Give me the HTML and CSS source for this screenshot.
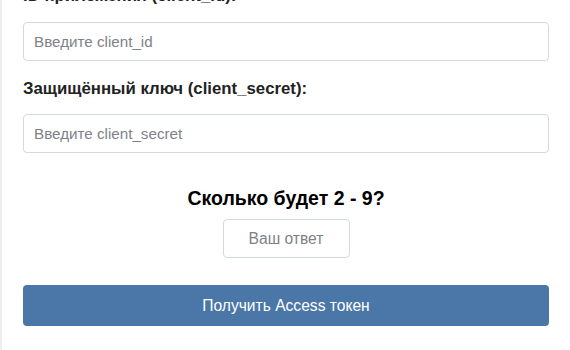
FILE: index.html
```html
<!DOCTYPE html>
<html lang="ru">
<head>
<meta charset="utf-8">
<title>Access token</title>
<link rel="stylesheet" href="styles.css">
</head>
<body>
<div class="page">
  <form class="card">
    <label class="label" for="cid">ID приложения (client_id):</label>
    <input class="field" id="cid" type="text" placeholder="Введите client_id">
    <label class="label" for="csec">Защищённый ключ (client_secret):</label>
    <input class="field" id="csec" type="text" placeholder="Введите client_secret">
    <div class="captcha">
      <div class="question">Сколько будет 2 - 9?</div>
      <input class="answer" type="text" placeholder="Ваш ответ">
    </div>
    <button class="submit" type="button">Получить Access токен</button>
  </form>
</div>
</body>
</html>
```
FILE: styles.css
```css
html, body {
  margin: 0;
  padding: 0;
  background: #ffffff;
  font-family: "Liberation Sans", Arial, sans-serif;
}
.page {
  border-left: 2px solid #edeef0;
  min-height: 350px;
  box-sizing: border-box;
  overflow: hidden;
}
.card {
  display: flex;
  flex-direction: column;
  padding: 0 21px 0 21px;
  margin-top: -14px;
}
.label {
  font-size: 16.8px;
  font-weight: bold;
  line-height: 20px;
  color: #222;
  margin: 0 0 16px 0;
}
.card .field + .label {
  margin-top: 18px;
  margin-bottom: 15px;
}
.field {
  box-sizing: border-box;
  height: 39px;
  width: 100%;
  border: 1px solid #d3d9de;
  border-radius: 4px;
  padding: 0 10px;
  font-family: "Liberation Sans", Arial, sans-serif;
  font-size: 15.2px;
  color: #222;
  outline: none;
}
.field::placeholder, .answer::placeholder {
  color: #7d8287;
  font-family: "Liberation Sans", Arial, sans-serif;
}
.captcha {
  display: flex;
  flex-direction: column;
  align-items: center;
  margin-top: 34px;
}
.question {
  font-size: 19.5px;
  font-weight: bold;
  line-height: 22px;
  color: #000;
  margin-bottom: 10px;
}
.answer {
  box-sizing: border-box;
  width: 127px;
  height: 39px;
  border: 1px solid #d3d9de;
  border-radius: 4px;
  text-align: center;
  font-family: "Liberation Sans", Arial, sans-serif;
  font-size: 15.6px;
  outline: none;
}
.submit {
  margin-top: 27px;
  height: 41px;
  width: 100%;
  border: none;
  border-radius: 4px;
  background: #4a76a8;
  color: #fff;
  font-family: "Liberation Sans", Arial, sans-serif;
  font-size: 15.6px;
  cursor: pointer;
}
```
